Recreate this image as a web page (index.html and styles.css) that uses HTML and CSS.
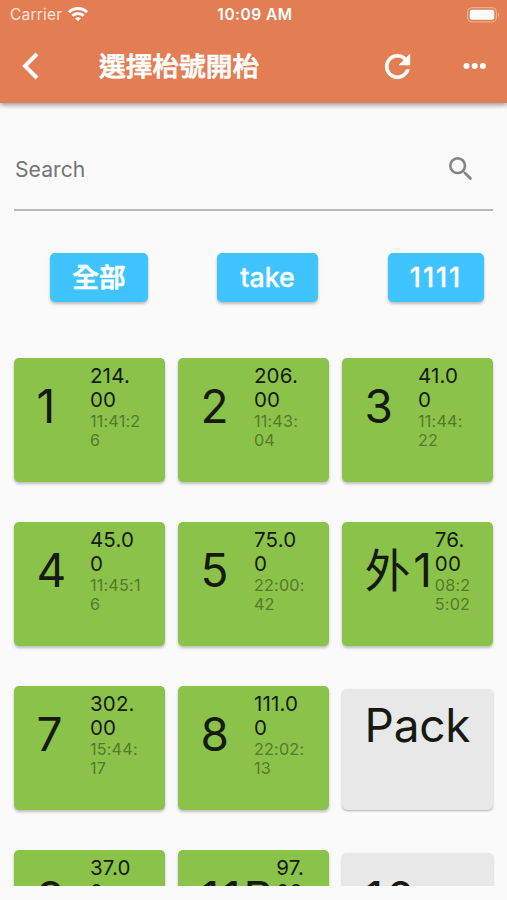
FILE: index.html
```html
<!DOCTYPE html>
<html lang="zh-Hant">

<head>
  <meta charset="UTF-8">
  <meta name="viewport" content="width=device-width, initial-scale=1.0">
  <title>選擇枱號開枱</title>
  <link rel="stylesheet" href="styles.css">
</head>

<body>
  <header>
    <!-- Status bar -->
    <div class="status-bar">
      <div class="carrier">
        <span>Carrier</span>
        <svg width="20" height="15" viewBox="0 0 20 15" fill="none" stroke="#fff" stroke-width="2.9">
          <path d="M1 5.200C6 .3 14 .3 19 5.200" />
          <path d="M4.300 8.800c3.200-3.100 8.200-3.100 11.400 0" />
          <path d="M7 11.300c1.700-1.500 4.300-1.500 6 0L10 14.300z" fill="#fff" stroke="none" />
        </svg>
      </div>
      <span class="time">10:09 AM</span>
      <div class="battery">
        <svg width="33" height="16" viewBox="0 0 33 16">
          <rect x=".7" y=".7" width="28.600" height="14.200" rx="4" fill="none" stroke="#fff" stroke-opacity=".45" />
          <rect x="2.800" y="2.800" width="24.400" height="10" rx="2" fill="#fff" />
          <path d="M31 5.500c1.600.7 1.600 3.900 0 4.600z" fill="#fff" fill-opacity=".5" />
        </svg>
      </div>
    </div>

    <!-- Toolbar -->
    <div class="toolbar">
      <svg class="back" width="17" height="28" viewBox="0 0 17 28" fill="none" stroke="#fff" stroke-width="4">
        <path d="M15 2L3 14l12 12" />
      </svg>
      <h1>選擇枱號開枱</h1>
      <svg class="refresh" width="37" height="37" viewBox="0 0 24 24" fill="#fff" stroke="#fff" stroke-width=".4">
        <path d="M17.650 6.350A7.958 7.958 0 0 0 12 4a8 8 0 1 0 7.730 10h-2.080A6 6 0 1 1 12 6c1.660 0 3.140.69 4.220 1.780L13 11h7V4l-2.350 2.350z" />
      </svg>
      <svg class="more" width="24" height="8" viewBox="0 0 24 8" fill="#fff">
        <circle cx="3.500" cy="4" r="3" />
        <circle cx="11.700" cy="4" r="3" />
        <circle cx="19.900" cy="4" r="3" />
      </svg>
    </div>
  </header>

  <main>
    <div class="search">
      <span>Search</span>
      <svg width="32" height="32" viewBox="0 0 24 24" fill="#858585">
        <path d="M15.500 14h-.79l-.28-.27A6.471 6.471 0 0 0 16 9.500 6.500 6.500 0 1 0 9.500 16c1.610 0 3.090-.59 4.230-1.570l.27.28v.79l5 4.990L20.490 19l-4.990-5zm-6 0C7.010 14 5 11.990 5 9.500S7.010 5 9.500 5 14 7.010 14 9.500 11.990 14 9.500 14z" />
      </svg>
    </div>

    <!-- Area filters -->
    <div class="filters">
      <button class="btn btn-all">全部</button>
      <button class="btn btn-take">take</button>
      <button class="btn btn-area">1111</button>
    </div>

    <!-- Tables -->
    <div class="tables">
      <div class="card">
        <div class="number">1</div>
        <div class="details"><p>214.<br>00</p><small>11:41:2<br>6</small></div>
      </div>
      <div class="card">
        <div class="number">2</div>
        <div class="details"><p>206.<br>00</p><small>11:43:<br>04</small></div>
      </div>
      <div class="card">
        <div class="number">3</div>
        <div class="details"><p>41.0<br>0</p><small>11:44:<br>22</small></div>
      </div>
      <div class="card">
        <div class="number">4</div>
        <div class="details"><p>45.0<br>0</p><small>11:45:1<br>6</small></div>
      </div>
      <div class="card">
        <div class="number">5</div>
        <div class="details"><p>75.0<br>0</p><small>22:00:<br>42</small></div>
      </div>
      <div class="card">
        <div class="number wide">外1</div>
        <div class="details"><p>76.<br>00</p><small>08:2<br>5:02</small></div>
      </div>
      <div class="card">
        <div class="number">7</div>
        <div class="details"><p>302.<br>00</p><small>15:44:<br>17</small></div>
      </div>
      <div class="card">
        <div class="number">8</div>
        <div class="details"><p>111.0<br>0</p><small>22:02:<br>13</small></div>
      </div>
      <div class="card empty">
        <div class="number name">Pack</div>
      </div>
      <div class="card">
        <div class="number">9</div>
        <div class="details"><p>37.0<br>0</p></div>
      </div>
      <div class="card">
        <div class="number wide">11B</div>
        <div class="details"><p>97.<br>00</p></div>
      </div>
      <div class="card empty">
        <div class="number wide">10</div>
      </div>
    </div>
  </main>
</body>

</html>
```
FILE: styles.css
```css
/* Reset and base styles */
* {
  box-sizing: border-box;
}

body,
h1,
p {
  margin: 0;
  padding: 0;
}

body {
  height: 900px;
  background: #fafafa;
  color: #161a10;
  font-family: 'Inter', 'Noto Sans CJK TC', sans-serif;
  overflow: hidden;
}

svg {
  display: block;
}

/* Header styles */
header {
  height: 103px;
  background: #e27d54;
  color: #fff;
  box-shadow: 0 2px 5px rgba(0, 0, 0, 0.4);
}

.status-bar {
  display: grid;
  grid-template-columns: 1fr auto 1fr;
  align-items: center;
  height: 29px;
  padding: 0 7px 0 10px;
}

.carrier {
  display: flex;
  align-items: center;
  gap: 6px;
  font-size: 15.5px;
  color: #fbe4da;
  letter-spacing: 0.2px;
}

.time {
  font-size: 15.5px;
  font-weight: 600;
  letter-spacing: 0.5px;
}

.battery {
  display: flex;
  justify-content: flex-end;
}

.toolbar {
  display: flex;
  align-items: center;
  height: 74px;
  padding: 0 20px 0 22px;
}

.toolbar h1 {
  flex: 1;
  margin-left: 60px;
  font-size: 26.7px;
  font-weight: 500;
  line-height: 40px;
  -webkit-text-stroke: 0.7px #fff;
}

.refresh {
  margin-right: 47px;
}

/* Search field */
main {
  padding: 26px 14px 0;
}

.search {
  display: flex;
  align-items: center;
  justify-content: space-between;
  height: 82px;
  padding: 0 16px 0 1px;
  border-bottom: 2px solid #b8b8b8;
  font-size: 21.2px;
  color: #757575;
}

/* Filter buttons */
.filters {
  display: flex;
  padding: 42px 9px 0 36px;
}

.btn {
  height: 49px;
  padding: 0 0 1px;
  border: 0;
  border-radius: 5px;
  background: #40c4ff;
  color: #fff;
  font-family: inherit;
  font-size: 26.7px;
  font-weight: 500;
  box-shadow: 0 2px 3px rgba(0, 0, 0, 0.25);
  -webkit-text-stroke: 0.3px #fff;
}

.btn-all {
  width: 98px;
  padding-bottom: 4px;
  -webkit-text-stroke-width: 0.7px;
}

.btn-take {
  width: 101px;
  margin-left: 69px;
}

.btn-area {
  width: 96px;
  margin-left: auto;
  letter-spacing: 2px;
}

/* Table cards */
.tables {
  display: grid;
  grid-template-columns: repeat(3, 1fr);
  grid-auto-rows: 124px;
  gap: 40px 13.5px;
  height: 542px;
  margin: 42px -14px 0;
  padding: 14px 14px 0 14.4px;
  overflow: hidden;
}

.card {
  display: flex;
  align-items: flex-start;
  padding: 6px 0 0 22px;
  border-radius: 5px;
  background: #8bc34a;
  box-shadow: 0 2px 3px rgba(0, 0, 0, 0.25);
  white-space: nowrap;
}

.number {
  min-width: 53.5px;
  margin-top: 14px;
  font-size: 46px;
  line-height: 56px;
}

.number.wide {
  letter-spacing: 2.8px;
}

.details p {
  font-size: 20.5px;
  line-height: 24.2px;
  letter-spacing: 0.2px;
}

.details small {
  display: block;
  font-size: 16.2px;
  line-height: 18.7px;
  letter-spacing: 0.2px;
  color: #547a2c;
}

/* Free tables */
.card.empty {
  margin-top: 3px;
  padding-top: 3px;
  background: #e8e8e8;
  box-shadow: 0 1px 2px rgba(0, 0, 0, 0.3);
}

.number.name {
  margin-top: 5px;
  letter-spacing: -0.2px;
}
```
